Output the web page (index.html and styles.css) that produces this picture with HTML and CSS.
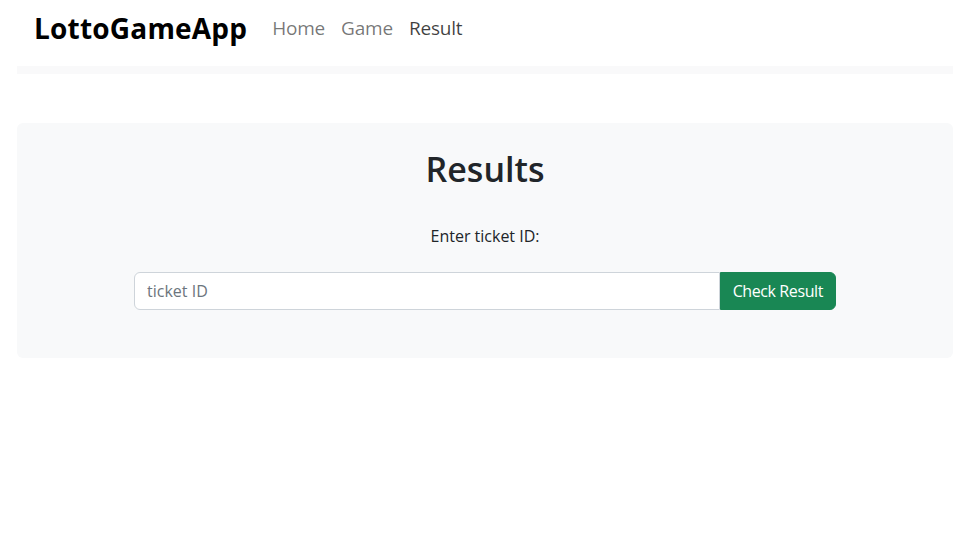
FILE: index.html
```html
<!DOCTYPE html>
<html lang="en">
<head>
<meta charset="utf-8">
<title>LottoGameApp</title>
<link rel="stylesheet" href="styles.css">
</head>
<body>
<div class="page">
  <nav class="navbar">
    <a class="brand" href="#">LottoGameApp</a>
    <ul class="nav">
      <li><a class="nav-link" href="#">Home</a></li>
      <li><a class="nav-link" href="#">Game</a></li>
      <li><a class="nav-link active" href="#">Result</a></li>
    </ul>
  </nav>
  <div class="nav-rule"></div>
  <main class="card">
    <h1 class="title">Results</h1>
    <p class="label">Enter ticket ID:</p>
    <div class="input-group">
      <input class="form-control" type="text" placeholder="ticket ID">
      <button class="btn-success" type="button">Check Result</button>
    </div>
  </main>
</div>
</body>
</html>
```

FILE: styles.css
```css
* { box-sizing: border-box; }
html, body { margin: 0; padding: 0; background: #fff; }
body {
  font-family: "Segoe UI", "Open Sans", "Noto Sans", sans-serif;
  font-size: 16px;
  line-height: 1.5;
  color: #212529;
}
.page { padding: 0 19px 0 17px; }
.navbar {
  display: flex;
  align-items: center;
  height: 66px;
  padding: 0 17px;
  padding-bottom: 9px;
}
.brand {
  font-size: 28px;
  font-weight: 700;
  color: #000;
  text-decoration: none;
  margin-right: 17px;
  line-height: 1.2;
  letter-spacing: 0.2px;
}
.nav {
  display: flex;
  list-style: none;
  margin: 0;
  padding: 0;
}
.nav-link {
  display: block;
  padding: 0 8px;
  font-size: 19px;
  letter-spacing: -0.2px;
  color: rgba(0, 0, 0, 0.55);
  text-decoration: none;
}
.nav-link.active { color: rgba(0, 0, 0, 0.75); }
.nav-rule {
  height: 8px;
  background: #f9f9fa;
}
.card {
  margin-top: 49px;
  background: #f8f9fa;
  border-radius: 6px;
  padding: 24px 0;
  text-align: center;
}
.title {
  margin: 0 0 8px;
  font-size: 34px;
  font-weight: 600;
  line-height: 1.3;
}
.label {
  margin: 33px 0 24px;
}
.input-group {
  display: flex;
  width: 75%;
  margin: 0 auto 24px;
}
.form-control {
  flex: 1;
  min-width: 0;
  height: 38px;
  padding: 6px 12px;
  font: inherit;
  color: #212529;
  background: #fff;
  border: 1px solid #ced4da;
  border-radius: 6px 0 0 6px;
}
.form-control::placeholder { color: #6c757d; }
.btn-success {
  height: 38px;
  padding: 6px 12px;
  font: inherit;
  letter-spacing: -0.4px;
  color: #fff;
  background: #198754;
  border: 1px solid #198754;
  border-radius: 0 6px 6px 0;
}
```
